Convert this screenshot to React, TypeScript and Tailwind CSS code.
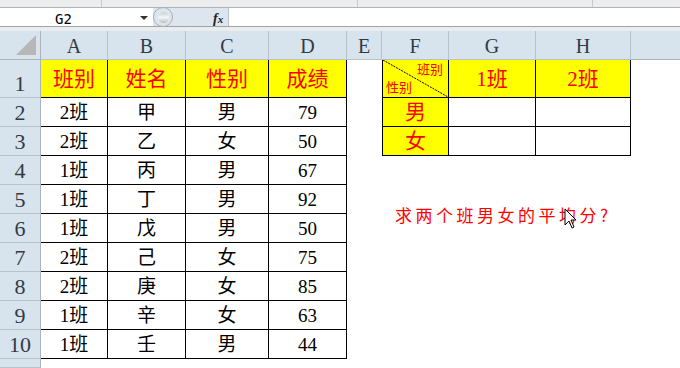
import React from "react";

const cols = ["A", "B", "C", "D", "E", "F", "G", "H", ""];

const rows = [
  ["2班", "甲", "男", "79"],
  ["2班", "乙", "女", "50"],
  ["1班", "丙", "男", "67"],
  ["1班", "丁", "男", "92"],
  ["1班", "戊", "男", "50"],
  ["2班", "己", "女", "75"],
  ["2班", "庚", "女", "85"],
  ["1班", "辛", "女", "63"],
  ["1班", "壬", "男", "44"],
];

const font = { fontFamily: '"Liberation Serif", "Noto Sans CJK SC", serif' };

function Hd({ children, last }: { children?: React.ReactNode; last?: boolean }) {
  return (
    <div
      className={
        "flex items-center justify-center pt-[2px] bg-[#d7e4ee] border-b border-[#a9b4be] text-[20px] text-[#333a44] " +
        (last ? "" : "border-r border-[#b9c1c8]")
      }
    >
      {children}
    </div>
  );
}

function RowNum({ n }: { n?: number }) {
  return (
    <div className="flex items-end justify-center bg-[#d7e4ee] border-r border-b border-r-[#a9b4be] border-b-[#b9c1c8] text-[22px] leading-[27px] text-[#333a44]">
      {n}
    </div>
  );
}

function Cell({
  children,
  yellow,
  red,
  black,
  big,
}: {
  children?: React.ReactNode;
  yellow?: boolean;
  red?: boolean;
  black?: boolean;
  big?: boolean;
}) {
  return (
    <div
      className={
        "flex items-center justify-center " +
        (yellow ? "bg-[#ffff00] " : "bg-white ") +
        (red ? "text-[#ff0000] " : "text-black ") +
        (black ? "border-r border-b border-black " : "") +
        (big ? "text-[21px] pt-[2px]" : "text-[19px] pt-[3px]")
      }
    >
      {children}
    </div>
  );
}

export default function App() {
  return (
    <div className="w-[680px] h-[368px] overflow-hidden bg-white flex flex-col" style={font}>
      {/* ribbon strip */}
      <div className="h-[8px] bg-[#ededed] border-b border-[#a7b6bf] flex shrink-0">
        <div className="w-[102px] border-r border-[#c9c9c9]" />
        <div className="w-[256px] border-r border-[#c9c9c9]" />
        <div className="w-[235px] border-r border-[#c9c9c9]" />
      </div>

      {/* formula bar */}
      <div className="h-[19px] flex items-stretch border-b border-[#a3a3a3] shrink-0">
        <div className="w-[153px] flex items-center relative">
          <span
            className="absolute left-[55px] top-[1px] text-[14px] text-black"
            style={{ fontFamily: '"DejaVu Sans Mono", monospace' }}
          >
            G2
          </span>
          <span className="absolute left-[140px] top-[8px] w-0 h-0 border-l-[4px] border-r-[4px] border-t-[4px] border-l-transparent border-r-transparent border-t-[#333]" />
        </div>
        <div className="w-[76px] bg-[#dde6ee] flex items-center relative border-r border-[#b7c2cb]">
          <div className="absolute left-0 top-[-1px] w-[20px] h-[20px] rounded-full border border-[#a6adb3] bg-[#dde6ee]">
            <div className="absolute left-[4px] top-[4px] w-[11px] h-[11px] rounded-full bg-gradient-to-b from-[#c8ced3] via-[#f4f6f7] to-[#b9c0c5]" />
          </div>
          <span className="absolute left-[60px] top-[0px] italic font-bold text-[14px] text-[#222]">f<span className="text-[11px]">x</span></span>
        </div>
        <div className="flex-1 bg-white" />
      </div>
      <div className="h-[4px] bg-[#e9edf0] shrink-0" />

      {/* sheet */}
      <div className="relative flex-1">
        <div className="grid grid-cols-[41px_67px_78px_83px_78px_35px_67px_87px_95px_1fr] grid-rows-[29px_38px_repeat(9,29px)_1fr] h-full">
          {/* header row */}
          <div className="relative bg-[#d7e4ee] border-r border-b border-[#a9b4be]">
            <div
              className="absolute right-[4px] bottom-[4px] w-[20px] h-[20px] bg-[#b7b7b7]"
              style={{ clipPath: "polygon(100% 0, 100% 100%, 0 100%)" }}
            />
          </div>
          {cols.map((c, i) => (
            <Hd key={i} last={i === cols.length - 1}>
              {c}
            </Hd>
          ))}

          {/* row 1 */}
          <RowNum n={1} />
          <Cell yellow red black big>班别</Cell>
          <Cell yellow red black big>姓名</Cell>
          <Cell yellow red black big>性别</Cell>
          <Cell yellow red black big>成绩</Cell>
          <Cell />
          <div className="relative bg-[#ffff00] border-l border-r border-b border-black text-[#ff0000] text-[13px] leading-none">
            <svg className="absolute inset-0" width="65" height="37" viewBox="0 0 65 37">
              <line x1="0" y1="0" x2="65" y2="37" stroke="#000" strokeWidth="1" strokeDasharray="2 1" />
            </svg>
            <span className="absolute right-[5px] top-[3px]">班别</span>
            <span className="absolute left-[3px] bottom-[3px]">性别</span>
          </div>
          <Cell yellow red black big>1班</Cell>
          <Cell yellow red black big>2班</Cell>
          <Cell />

          {rows.map((r, i) => (
            <React.Fragment key={i}>
              <RowNum n={i + 2} />
              {r.map((v, j) => (
                <Cell key={j} black>
                  {v}
                </Cell>
              ))}
              <Cell />
              {i === 0 || i === 1 ? (
                <>
                  <div className="flex items-center justify-center bg-[#ffff00] border-l border-r border-b border-black text-[#ff0000] text-[21px] pt-[2px]">
                    {i === 0 ? "男" : "女"}
                  </div>
                  <Cell black />
                  <Cell black />
                </>
              ) : (
                <>
                  <Cell />
                  <Cell />
                  <Cell />
                </>
              )}
              <Cell />
            </React.Fragment>
          ))}

          {/* row 11 */}
          <RowNum />
          <div className="col-span-9 bg-white" />
        </div>

        {/* note text */}
        <div
          className="absolute left-[395px] top-[171px] text-[17px] tracking-[3.5px] text-[#ff0000] whitespace-nowrap"
          style={{ fontFamily: '"Noto Sans CJK SC", sans-serif' }}
        >
          求两个班男女的平均分?
        </div>

        {/* mouse cursor */}
        <svg className="absolute left-[564px] top-[177px]" width="14" height="22" viewBox="0 0 14 22">
          <path d="M1 1 L1 17 L5 13 L8 20 L10 19 L7 12 L12 12 Z" fill="#fff" stroke="#000" strokeWidth="1" />
        </svg>
      </div>
    </div>
  );
}
